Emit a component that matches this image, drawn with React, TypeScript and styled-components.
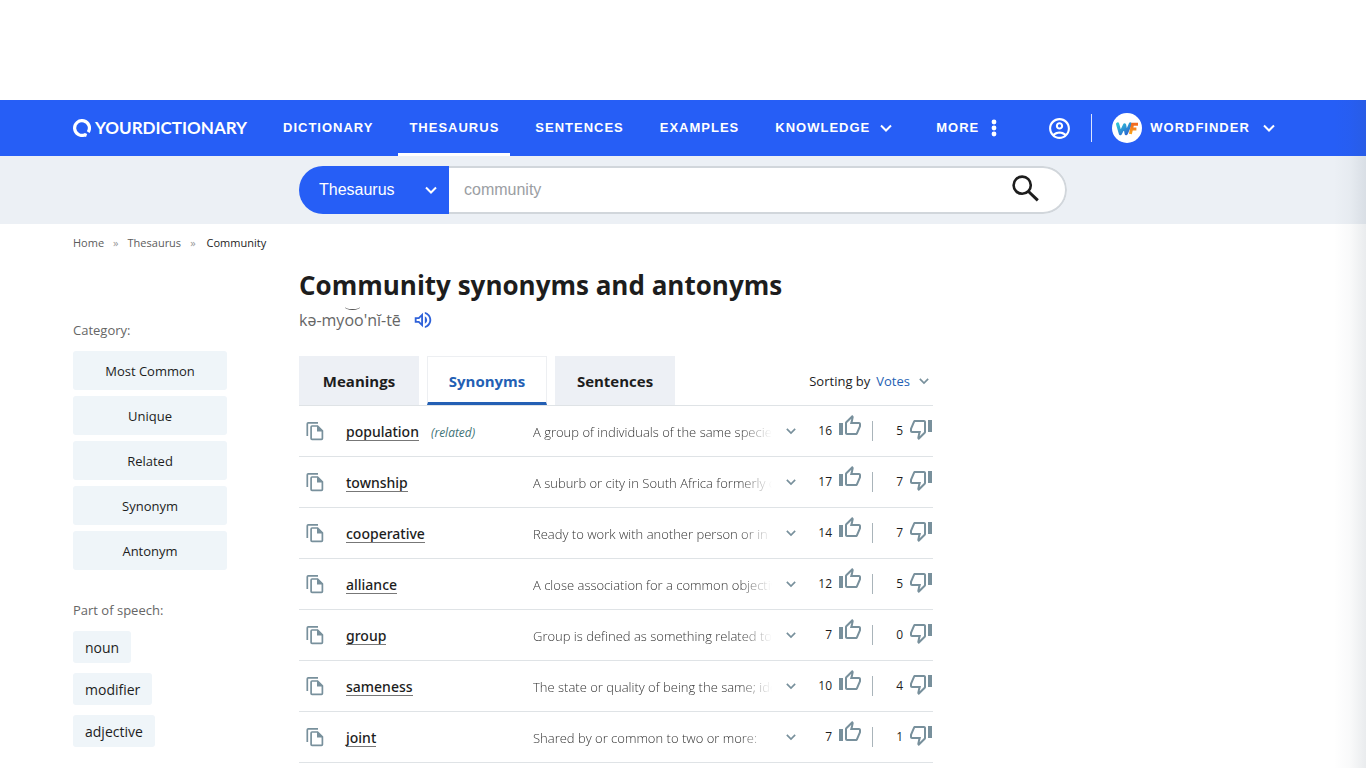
import React from "react";
import styled, { createGlobalStyle } from "styled-components";
import {
  MdOutlineThumbUp,
  MdOutlineThumbDown,
  MdOutlineAccountCircle,
  MdOutlineVolumeUp,
} from "react-icons/md";

const blue = "#265ef6";
const sans = '"Open Sans", "Noto Sans", sans-serif';
const arial = '"Liberation Sans", Arial, sans-serif';

const GlobalStyle = createGlobalStyle`
  *, *::before, *::after { box-sizing: border-box; }
  body { margin: 0; background: #fff; color: #1d1d1d; font-family: ${sans}; }
  button { font: inherit; color: inherit; border: 0; padding: 0; background: none; cursor: pointer; }
  a { color: inherit; text-decoration: none; }
  svg { display: block; flex: none; }
`;

const Page = styled.div`
  position: relative;
  min-height: 100vh;
  overflow-x: hidden;
`;

const AdSlot = styled.div`
  height: 100px;
`;

const DrawerShadow = styled.div`
  position: absolute;
  top: 100px;
  right: 0;
  bottom: 0;
  width: 32px;
  pointer-events: none;
  background: linear-gradient(to right, rgba(60, 80, 100, 0), rgba(60, 80, 100, 0.03) 50%, rgba(60, 80, 100, 0.11));
`;

const Container = styled.div`
  max-width: 1220px;
  margin: 0 auto;
`;

const Columns = styled(Container)<{ $main: number }>`
  display: grid;
  grid-template-columns: 154px minmax(0, ${(p) => p.$main}px);
  column-gap: 72px;
`;

const Header = styled.header`
  background: ${blue};
  color: #fff;
`;

const HeaderRow = styled(Container)`
  display: flex;
  align-items: center;
  height: 56px;
`;

const Logo = styled.a`
  display: flex;
  align-items: center;
  gap: 4px;
  width: 199px;
  font: 700 17px/24px Lato, sans-serif;
`;

const Nav = styled.nav`
  display: flex;
  gap: 14px;
  height: 56px;
`;

const NavItem = styled.a<{ $active?: boolean }>`
  display: flex;
  align-items: center;
  gap: 10px;
  padding: 0 11px;
  border-top: 2px solid transparent;
  border-bottom: 3px solid ${(p) => (p.$active ? "#fff" : "transparent")};
  font: bold 13px/16px ${arial};
  letter-spacing: 1px;
`;

const MoreItem = styled(NavItem)`
  margin-left: 8px;
  gap: 12px;
`;

const Account = styled.div`
  display: flex;
  align-items: center;
  margin-left: 39px;
`;

const AccountDivider = styled.span`
  width: 1px;
  height: 28px;
  margin: 0 20px 0 19px;
  background: #dbe5ff;
`;

const Product = styled.button`
  display: flex;
  align-items: center;
  gap: 8px;
  font: bold 13px/16px ${arial};
  letter-spacing: 1px;
  span { margin-right: 5px; }
`;

const SearchStrip = styled.div`
  padding: 10px 0;
  background: #ecf0f5;
`;

const SearchForm = styled.form`
  grid-column: 2;
  display: flex;
  height: 48px;
  border-radius: 24px;
  overflow: hidden;
  font: 16px/24px ${arial};
`;

const SelectWrap = styled.label`
  display: flex;
  align-items: center;
  width: 150px;
  padding: 0 12px 0 20px;
  background: ${blue};
  color: #fff;
`;

const Select = styled.select`
  flex: 1;
  min-width: 0;
  padding: 0;
  border: 0;
  background: transparent;
  color: inherit;
  font: inherit;
  appearance: none;
`;

const SearchField = styled.div`
  flex: 1;
  display: flex;
  align-items: center;
  padding: 0 23px 0 15px;
  background: #fff;
  border: 2px solid #d1d6db;
  border-left: 0;
  border-radius: 0 24px 24px 0;
`;

const SearchInput = styled.input`
  flex: 1;
  min-width: 0;
  padding: 0;
  border: 0;
  outline: 0;
  background: transparent;
  font: inherit;
  &::placeholder { color: #9b9ea3; opacity: 1; }
`;

const SearchButton = styled.button`
  color: #1d1d1d;
`;

const Breadcrumb = styled.nav`
  display: flex;
  gap: 9px;
  padding: 10px 0 0;
  font-size: 11px;
  line-height: 18px;
  color: #5c5c5c;
  span { color: #999; }
  strong { margin-left: 2px; color: #1d1d1d; font-weight: 400; }
`;

const Sidebar = styled.aside`
  padding-top: 68px;
`;

const FilterLabel = styled.h2`
  margin: 0 0 11px;
  color: #666;
  font-size: 13px;
  line-height: 20px;
  font-weight: 400;
`;

const CategoryList = styled.div`
  display: grid;
  gap: 6px;
  margin-bottom: 30px;
`;

const CategoryButton = styled.button`
  height: 39px;
  border-radius: 3px;
  background: #eff5f9;
  font-size: 13px;
  line-height: 20px;
`;

const ChipList = styled.div`
  display: flex;
  flex-direction: column;
  align-items: flex-start;
  gap: 10px;
`;

const Chip = styled.button`
  height: 32px;
  padding: 2px 12px 0;
  border-radius: 3px;
  background: #eff5f9;
  font-size: 14px;
  line-height: 20px;
`;

const Main = styled.main`
  padding-top: 14px;
`;

const Title = styled.h1`
  margin: 0;
  font-size: 26px;
  line-height: 38px;
  font-weight: 700;
`;

const Pronunciation = styled.div`
  display: flex;
  align-items: center;
  gap: 11px;
  height: 32px;
  color: #666;
  font-size: 16px;
  line-height: 24px;
  button { color: #2f62d9; }
`;

const LongVowel = styled.span`
  position: relative;
  &::before {
    content: "";
    position: absolute;
    top: -5px;
    left: 1px;
    right: 4px;
    height: 6px;
    border-bottom: 1px solid #555;
    border-radius: 50%;
  }
`;

const TabBar = styled.div`
  display: flex;
  align-items: center;
  gap: 8px;
  margin-top: 20px;
  border-bottom: 1px solid #dfe3e6;
`;

const Tab = styled.button<{ $active?: boolean }>`
  width: 120px;
  height: 49px;
  padding-top: ${(p) => (p.$active ? 3 : 1)}px;
  border: ${(p) => (p.$active ? "1px solid #edeff2" : "0")};
  border-bottom: ${(p) => (p.$active ? "3px solid #235fb4" : "0")};
  background: ${(p) => (p.$active ? "#fff" : "#edf0f5")};
  color: ${(p) => (p.$active ? "#235fb4" : "#1d1d1d")};
  font-size: 15px;
  line-height: 20px;
  font-weight: 700;
`;

const Sorting = styled.div`
  display: flex;
  align-items: center;
  gap: 6px;
  margin-left: auto;
  padding-right: 4px;
  font-size: 13px;
  line-height: 20px;
`;

const SortButton = styled.button`
  display: flex;
  align-items: center;
  gap: 9px;
  color: #235fb4;
`;

const Results = styled.table`
  width: 100%;
  table-layout: fixed;
  border-spacing: 0;
`;

const Col = styled.col<{ $width?: number }>`
  width: ${(p) => (p.$width ? `${p.$width}px` : "auto")};
`;

const Cell = styled.td`
  height: 51px;
  padding: 0;
  border-bottom: 1px solid #dfe3e6;
  vertical-align: middle;
`;

const CopyButton = styled.button`
  display: block;
  margin-left: 6px;
`;

const Word = styled.a`
  display: inline-block;
  border-bottom: 1px solid #777;
  font-family: "Noto Sans", "Open Sans", sans-serif;
  font-size: 14px;
  line-height: 16px;
  font-weight: 500;
`;

const Relation = styled.em`
  margin-left: 12px;
  color: #3f7377;
  font-size: 12px;
  line-height: 16px;
`;

const Definition = styled.div`
  margin-right: 5px;
  padding-top: 2px;
  overflow: hidden;
  white-space: nowrap;
  color: #333;
  font-size: 13px;
  line-height: 20px;
  font-weight: 300;
  mask-image: linear-gradient(to right, #000 calc(100% - 32px), transparent);
`;

const ExpandButton = styled.button`
  display: block;
  margin-left: 9px;
`;

const Votes = styled.div`
  display: flex;
  align-items: center;
  justify-content: flex-end;
`;

const Count = styled.span`
  margin-right: 6px;
  font-size: 12px;
  line-height: 16px;
`;

const VoteButton = styled.button<{ $lift: number }>`
  padding-bottom: ${(p) => p.$lift}px;
  color: #78909c;
`;

const VoteDivider = styled.span`
  width: 1px;
  height: 20px;
  margin-left: 10px;
  background: #a9b4ba;
`;

const DownCount = styled(Count)`
  width: 30px;
  text-align: right;
`;

const Chevron = ({ size = 12, color = "#fff", weight = 2 }: { size?: number; color?: string; weight?: number }) => (
  <svg width={size} height={size} viewBox="0 0 12 12" fill="none" stroke={color} strokeWidth={weight} aria-hidden="true">
    <path d="M1 3.5 6 8.5 11 3.5" />
  </svg>
);

const LogoMark = () => (
  <svg width="18" height="18" viewBox="0 0 18 18" fill="none" stroke="#fff" strokeWidth="3.2" aria-hidden="true">
    <path d="M13.6 16.4 12 15.8A7.4 7.4 0 1 1 15.2 13.1" />
  </svg>
);

const Dots = () => (
  <svg width="6" height="18" viewBox="0 0 6 18" fill="#fff" aria-hidden="true">
    <circle cx="3" cy="3" r="2.4" />
    <circle cx="3" cy="9" r="2.4" />
    <circle cx="3" cy="15" r="2.4" />
  </svg>
);

const SearchIcon = () => (
  <svg width="32" height="32" viewBox="0 0 32 32" fill="none" stroke="currentColor" aria-hidden="true">
    <circle cx="12.2" cy="11.2" r="8.6" strokeWidth="2.6" />
    <path d="M18 17 27.8 26.4" strokeWidth="3" />
  </svg>
);

const WordFinderMark = () => (
  <svg width="30" height="30" viewBox="0 0 30 30" aria-hidden="true">
    <defs>
      <linearGradient id="wf" x1="0" y1="0" x2="1" y2="1">
        <stop offset="0" stopColor="#2fc4d6" />
        <stop offset="1" stopColor="#2a5fd0" />
      </linearGradient>
      <linearGradient id="ff" x1="0" y1="0" x2="0" y2="1">
        <stop offset="0" stopColor="#f26a21" />
        <stop offset="1" stopColor="#f9a51a" />
      </linearGradient>
    </defs>
    <circle cx="15" cy="15" r="15" fill="#fff" />
    <path d="M5.6 11 8.4 20.6 12.6 12 14.2 20.6 18.4 11" fill="none" stroke="url(#wf)" strokeWidth="3.2" strokeLinejoin="round" strokeLinecap="round" />
    <path d="M18.4 21 20.6 11.2H26M19.6 16H24.4" fill="none" stroke="url(#ff)" strokeWidth="3" />
  </svg>
);

const CopyIcon = () => (
  <svg width="20" height="20" viewBox="0 0 20 20" fill="none" stroke="#78909c" strokeWidth="1.7" aria-hidden="true">
    <path d="M2.3 15V2.8Q2.3 1.9 3.2 1.9H13" />
    <path d="M7 5H12.6L17.4 9.8V17.4Q17.4 18.3 16.5 18.3H7Q6.1 18.3 6.1 17.4V5.9Q6.1 5 7 5Z" />
    <path d="M12 4.6V10.4H17.8Z" fill="#78909c" stroke="none" />
  </svg>
);

const categories = ["Most Common", "Unique", "Related", "Synonym", "Antonym"];
const parts = ["noun", "modifier", "adjective"];

const rows = [
  { word: "population", related: true, text: "A group of individuals of the same species", up: 16, down: 5 },
  { word: "township", text: "A suburb or city in South Africa formerly of", up: 17, down: 7 },
  { word: "cooperative", text: "Ready to work with another person or in a", up: 14, down: 7 },
  { word: "alliance", text: "A close association for a common objective", up: 12, down: 5 },
  { word: "group", text: "Group is defined as something related to", up: 7, down: 0 },
  { word: "sameness", text: "The state or quality of being the same; identity", up: 10, down: 4 },
  { word: "joint", text: "Shared by or common to two or more:", up: 7, down: 1 },
];

export default function App() {
  return (
    <Page>
      <GlobalStyle />
      <AdSlot />
      <Header>
        <HeaderRow>
          <Logo href="#home">
            <LogoMark />
            YOURDICTIONARY
          </Logo>
          <Nav>
            <NavItem href="#dictionary">DICTIONARY</NavItem>
            <NavItem href="#thesaurus" $active>THESAURUS</NavItem>
            <NavItem href="#sentences">SENTENCES</NavItem>
            <NavItem href="#examples">EXAMPLES</NavItem>
            <NavItem href="#knowledge">KNOWLEDGE <Chevron /></NavItem>
            <MoreItem href="#more">MORE <Dots /></MoreItem>
          </Nav>
          <Account>
            <button aria-label="Account"><MdOutlineAccountCircle size={25} /></button>
            <AccountDivider />
            <Product>
              <WordFinderMark />
              <span>WORDFINDER</span>
              <Chevron />
            </Product>
          </Account>
        </HeaderRow>
      </Header>
      <SearchStrip>
        <Columns $main={768}>
          <SearchForm onSubmit={(e) => e.preventDefault()}>
            <SelectWrap>
              <Select aria-label="Search in" defaultValue="Thesaurus">
                <option>Thesaurus</option>
                <option>Dictionary</option>
                <option>Sentences</option>
              </Select>
              <Chevron />
            </SelectWrap>
            <SearchField>
              <SearchInput aria-label="Search term" placeholder="community" />
              <SearchButton aria-label="Search"><SearchIcon /></SearchButton>
            </SearchField>
          </SearchForm>
        </Columns>
      </SearchStrip>
      <Container>
        <Breadcrumb aria-label="Breadcrumb">
          <a href="#home">Home</a>
          <span>»</span>
          <a href="#thesaurus">Thesaurus</a>
          <span>»</span>
          <strong>Community</strong>
        </Breadcrumb>
      </Container>
      <Columns $main={634}>
        <Sidebar>
          <FilterLabel>Category:</FilterLabel>
          <CategoryList>
            {categories.map((c) => <CategoryButton key={c}>{c}</CategoryButton>)}
          </CategoryList>
          <FilterLabel>Part of speech:</FilterLabel>
          <ChipList>
            {parts.map((p) => <Chip key={p}>{p}</Chip>)}
          </ChipList>
        </Sidebar>
        <Main>
          <Title>Community synonyms and antonyms</Title>
          <Pronunciation>
            <span>kə-my<LongVowel>oo</LongVowel>'nĭ-tē</span>
            <button aria-label="Listen"><MdOutlineVolumeUp size={22} /></button>
          </Pronunciation>
          <TabBar>
            <Tab>Meanings</Tab>
            <Tab $active>Synonyms</Tab>
            <Tab>Sentences</Tab>
            <Sorting>
              Sorting by
              <SortButton>Votes <Chevron size={10} color="#78909c" /></SortButton>
            </Sorting>
          </TabBar>
          <Results>
            <colgroup>
              <Col $width={47} />
              <Col $width={187} />
              <Col />
              <Col $width={28} />
              <Col $width={128} />
            </colgroup>
            <tbody>
              {rows.map((r) => (
                <tr key={r.word}>
                  <Cell><CopyButton aria-label={`Copy ${r.word}`}><CopyIcon /></CopyButton></Cell>
                  <Cell>
                    <Word href={`#${r.word}`}>{r.word}</Word>
                    {r.related && <Relation>(related)</Relation>}
                  </Cell>
                  <Cell><Definition>{r.text}</Definition></Cell>
                  <Cell><ExpandButton aria-label="Expand definition"><Chevron size={10} color="#78909c" /></ExpandButton></Cell>
                  <Cell>
                    <Votes>
                      <Count>{r.up}</Count>
                      <VoteButton $lift={10} aria-label="Vote up"><MdOutlineThumbUp size={24} /></VoteButton>
                      <VoteDivider />
                      <DownCount>{r.down}</DownCount>
                      <VoteButton $lift={4} aria-label="Vote down"><MdOutlineThumbDown size={24} /></VoteButton>
                    </Votes>
                  </Cell>
                </tr>
              ))}
            </tbody>
          </Results>
        </Main>
      </Columns>
      <DrawerShadow />
    </Page>
  );
}
